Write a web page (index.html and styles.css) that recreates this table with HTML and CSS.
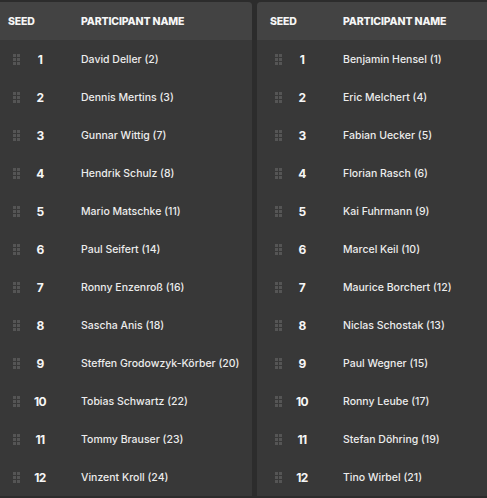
FILE: index.html
```html
<!DOCTYPE html>
<html lang="de">
<head>
<meta charset="utf-8">
<title>Seeding</title>
<link rel="stylesheet" href="styles.css">
</head>
<body>
<div class="board">
  <section class="panel panel-first">
    <div class="head">
      <span class="h-seed">SEED</span>
      <span class="h-name">PARTICIPANT NAME</span>
    </div>
    <div class="row"><span class="handle"><i></i><i></i><i></i><i></i><i></i><i></i></span><span class="seed">1</span><span class="name">David Deller (2)</span></div>
    <div class="row"><span class="handle"><i></i><i></i><i></i><i></i><i></i><i></i></span><span class="seed">2</span><span class="name">Dennis Mertins (3)</span></div>
    <div class="row"><span class="handle"><i></i><i></i><i></i><i></i><i></i><i></i></span><span class="seed">3</span><span class="name">Gunnar Wittig (7)</span></div>
    <div class="row"><span class="handle"><i></i><i></i><i></i><i></i><i></i><i></i></span><span class="seed">4</span><span class="name">Hendrik Schulz (8)</span></div>
    <div class="row"><span class="handle"><i></i><i></i><i></i><i></i><i></i><i></i></span><span class="seed">5</span><span class="name">Mario Matschke (11)</span></div>
    <div class="row"><span class="handle"><i></i><i></i><i></i><i></i><i></i><i></i></span><span class="seed">6</span><span class="name">Paul Seifert (14)</span></div>
    <div class="row"><span class="handle"><i></i><i></i><i></i><i></i><i></i><i></i></span><span class="seed">7</span><span class="name">Ronny Enzenroß (16)</span></div>
    <div class="row"><span class="handle"><i></i><i></i><i></i><i></i><i></i><i></i></span><span class="seed">8</span><span class="name">Sascha Anis (18)</span></div>
    <div class="row"><span class="handle"><i></i><i></i><i></i><i></i><i></i><i></i></span><span class="seed">9</span><span class="name">Steffen Grodowzyk-Körber (20)</span></div>
    <div class="row"><span class="handle"><i></i><i></i><i></i><i></i><i></i><i></i></span><span class="seed">10</span><span class="name">Tobias Schwartz (22)</span></div>
    <div class="row"><span class="handle"><i></i><i></i><i></i><i></i><i></i><i></i></span><span class="seed">11</span><span class="name">Tommy Brauser (23)</span></div>
    <div class="row"><span class="handle"><i></i><i></i><i></i><i></i><i></i><i></i></span><span class="seed">12</span><span class="name">Vinzent Kroll (24)</span></div>
  </section>
  <section class="panel">
    <div class="head">
      <span class="h-seed">SEED</span>
      <span class="h-name">PARTICIPANT NAME</span>
    </div>
    <div class="row"><span class="handle"><i></i><i></i><i></i><i></i><i></i><i></i></span><span class="seed">1</span><span class="name">Benjamin Hensel (1)</span></div>
    <div class="row"><span class="handle"><i></i><i></i><i></i><i></i><i></i><i></i></span><span class="seed">2</span><span class="name">Eric Melchert (4)</span></div>
    <div class="row"><span class="handle"><i></i><i></i><i></i><i></i><i></i><i></i></span><span class="seed">3</span><span class="name">Fabian Uecker (5)</span></div>
    <div class="row"><span class="handle"><i></i><i></i><i></i><i></i><i></i><i></i></span><span class="seed">4</span><span class="name">Florian Rasch (6)</span></div>
    <div class="row"><span class="handle"><i></i><i></i><i></i><i></i><i></i><i></i></span><span class="seed">5</span><span class="name">Kai Fuhrmann (9)</span></div>
    <div class="row"><span class="handle"><i></i><i></i><i></i><i></i><i></i><i></i></span><span class="seed">6</span><span class="name">Marcel Keil (10)</span></div>
    <div class="row"><span class="handle"><i></i><i></i><i></i><i></i><i></i><i></i></span><span class="seed">7</span><span class="name">Maurice Borchert (12)</span></div>
    <div class="row"><span class="handle"><i></i><i></i><i></i><i></i><i></i><i></i></span><span class="seed">8</span><span class="name">Niclas Schostak (13)</span></div>
    <div class="row"><span class="handle"><i></i><i></i><i></i><i></i><i></i><i></i></span><span class="seed">9</span><span class="name">Paul Wegner (15)</span></div>
    <div class="row"><span class="handle"><i></i><i></i><i></i><i></i><i></i><i></i></span><span class="seed">10</span><span class="name">Ronny Leube (17)</span></div>
    <div class="row"><span class="handle"><i></i><i></i><i></i><i></i><i></i><i></i></span><span class="seed">11</span><span class="name">Stefan Döhring (19)</span></div>
    <div class="row"><span class="handle"><i></i><i></i><i></i><i></i><i></i><i></i></span><span class="seed">12</span><span class="name">Tino Wirbel (21)</span></div>
  </section>
</div>
</body>
</html>
```
FILE: styles.css
```css
html, body {
  margin: 0;
  padding: 0;
  background: #2c2c2c;
  overflow: hidden;
}
body {
  font-family: Inter, "Liberation Sans", sans-serif;
  color: #ececec;
}
.board {
  display: flex;
  gap: 5px;
  padding-top: 2px;
}
.panel {
  flex: 0 0 257px;
  width: 257px;
  background: #383838;
  border-radius: 4px 4px 0 0;
  overflow: hidden;
}
.panel-first {
  margin-left: -5px;
}
.head {
  display: grid;
  grid-template-columns: 73px 1fr;
  align-items: center;
  height: 38px;
  padding-left: 13px;
  background: #434343;
  font-size: 10.5px;
  font-weight: 800;
  color: #f6f6f6;
  letter-spacing: -0.15px;
}
.row {
  display: grid;
  grid-template-columns: 8px 38px 1fr;
  align-items: center;
  height: 38px;
  padding-left: 18px;
}
.handle {
  display: grid;
  grid-template-columns: 3px 3px;
  grid-auto-rows: 3px;
  gap: 1px;
}
.handle i {
  display: block;
  background: #555555;
}
.seed {
  text-align: center;
  font-size: 12px;
  font-weight: 700;
  color: #f6f6f6;
  letter-spacing: -0.6px;
}
.name {
  padding-left: 22px;
  font-size: 10.5px;
  font-weight: 500;
  color: #ececec;
  white-space: nowrap;
}
```
